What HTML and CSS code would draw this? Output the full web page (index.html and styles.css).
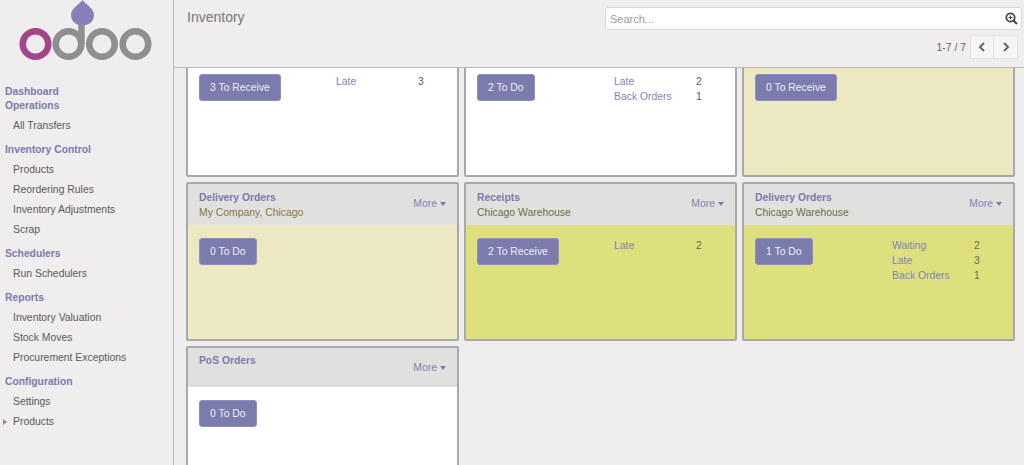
FILE: index.html
```html
<!DOCTYPE html>
<html lang="en">
<head>
<meta charset="utf-8">
<title>Inventory</title>
<link rel="stylesheet" href="styles.css">
</head>
<body>
<div class="app">
  <aside class="sidebar">
    <div class="logo">
      <svg width="173" height="62" viewBox="0 0 173 62">
        <g fill="none" stroke-width="6.500">
          <circle cx="35.500" cy="44" r="12.800" stroke="#a24689"/>
          <circle cx="68.500" cy="44" r="12.800" stroke="#8f8f8f"/>
          <circle cx="102" cy="44" r="12.800" stroke="#8f8f8f"/>
          <circle cx="135.500" cy="44" r="12.800" stroke="#8f8f8f"/>
          <path d="M81.500 44V20" stroke="#8f8f8f"/>
        </g>
        <path d="M82.500 0C79 5 71 8 71 15C71 21 76 25.500 82.500 25.500C89 25.500 94 21 94 15C94 8 86 5 82.500 0Z" fill="#8580b5"/>
      </svg>
    </div>
    <nav class="menu">
      <h4 class="menu-head">Dashboard</h4>
      <h4 class="menu-head">Operations</h4>
      <a class="menu-item">All Transfers</a>
      <h4 class="menu-head menu-gap">Inventory Control</h4>
      <a class="menu-item">Products</a>
      <a class="menu-item">Reordering Rules</a>
      <a class="menu-item">Inventory Adjustments</a>
      <a class="menu-item">Scrap</a>
      <h4 class="menu-head menu-gap">Schedulers</h4>
      <a class="menu-item">Run Schedulers</a>
      <h4 class="menu-head menu-gap">Reports</h4>
      <a class="menu-item">Inventory Valuation</a>
      <a class="menu-item">Stock Moves</a>
      <a class="menu-item">Procurement Exceptions</a>
      <h4 class="menu-head menu-gap">Configuration</h4>
      <a class="menu-item">Settings</a>
      <a class="menu-item menu-caret">Products</a>
    </nav>
  </aside>
  <main class="main">
    <header class="topbar">
      <h1 class="title">Inventory</h1>
      <div class="tools">
        <div class="search">
          <span class="search-text">Search...</span>
          <svg class="search-icon" width="13" height="13" viewBox="0 0 13 13">
            <circle cx="5.500" cy="5.500" r="4.200" fill="none" stroke="#444" stroke-width="1.800"/>
            <path d="M8.500 8.500L12 12" stroke="#444" stroke-width="2.200"/>
            <path d="M3.500 5.500H7.500M5.500 3.500V7.500" stroke="#444" stroke-width="1"/>
          </svg>
        </div>
        <div class="pager">
          <span class="pager-text">1-7 / 7</span>
          <div class="pager-btns">
            <span class="pager-btn"><svg width="8" height="10" viewBox="0 0 8 10"><path d="M6 1L2 5L6 9" fill="none" stroke="#666" stroke-width="2"/></svg></span>
            <span class="pager-btn"><svg width="8" height="10" viewBox="0 0 8 10"><path d="M2 1L6 5L2 9" fill="none" stroke="#666" stroke-width="2"/></svg></span>
          </div>
        </div>
      </div>
    </header>
    <div class="viewport">
      <div class="board">
        <section class="card">
          <div class="card-head"></div>
          <div class="card-body">
            <button class="action">3 To Receive</button>
            <dl class="stats"><div class="stat"><dt>Late</dt><dd>3</dd></div></dl>
          </div>
        </section>
        <section class="card">
          <div class="card-head"></div>
          <div class="card-body">
            <button class="action">2 To Do</button>
            <dl class="stats"><div class="stat"><dt>Late</dt><dd>2</dd></div><div class="stat"><dt>Back Orders</dt><dd>1</dd></div></dl>
          </div>
        </section>
        <section class="card card-pale">
          <div class="card-head"></div>
          <div class="card-body">
            <button class="action">0 To Receive</button>
          </div>
        </section>
        <section class="card card-pale">
          <div class="card-head">
            <div class="card-titles"><h3 class="card-title">Delivery Orders</h3><p class="card-sub">My Company, Chicago</p></div>
            <span class="more">More <i class="more-caret"></i></span>
          </div>
          <div class="card-body">
            <button class="action">0 To Do</button>
          </div>
        </section>
        <section class="card card-bright">
          <div class="card-head">
            <div class="card-titles"><h3 class="card-title">Receipts</h3><p class="card-sub">Chicago Warehouse</p></div>
            <span class="more">More <i class="more-caret"></i></span>
          </div>
          <div class="card-body">
            <button class="action">2 To Receive</button>
            <dl class="stats"><div class="stat"><dt>Late</dt><dd>2</dd></div></dl>
          </div>
        </section>
        <section class="card card-bright">
          <div class="card-head">
            <div class="card-titles"><h3 class="card-title">Delivery Orders</h3><p class="card-sub">Chicago Warehouse</p></div>
            <span class="more">More <i class="more-caret"></i></span>
          </div>
          <div class="card-body">
            <button class="action">1 To Do</button>
            <dl class="stats"><div class="stat"><dt>Waiting</dt><dd>2</dd></div><div class="stat"><dt>Late</dt><dd>3</dd></div><div class="stat"><dt>Back Orders</dt><dd>1</dd></div></dl>
          </div>
        </section>
        <section class="card">
          <div class="card-head card-head-short">
            <div class="card-titles"><h3 class="card-title">PoS Orders</h3></div>
            <span class="more">More <i class="more-caret"></i></span>
          </div>
          <div class="card-body">
            <button class="action">0 To Do</button>
          </div>
        </section>
      </div>
    </div>
  </main>
</div>
</body>
</html>
```
FILE: styles.css
```css
* { box-sizing: border-box; }
html, body { margin: 0; height: 100%; overflow: hidden; }
body { font-family: "Liberation Sans", Arial, sans-serif; font-size: 10.400px; color: #5a5a5a; background: #efedee; }
.app { display: flex; height: 465px; }

.sidebar { width: 174px; flex: none; border-right: 1px solid #b9b7b8; background: #efedee; }
.logo { height: 85px; }
.logo svg { display: block; }
.menu { display: flex; flex-direction: column; }
.menu-head { margin: 0; padding-left: 5px; height: 14px; line-height: 14px; font-size: 10.300px; font-weight: bold; color: #7c7bad; }
.menu-gap { margin-top: 7px; }
.menu-item { position: relative; padding-left: 13px; height: 20px; line-height: 20px; color: #5a5a5a; }
.menu-head + .menu-item { margin-top: 3px; }
.menu-caret::before { content: ""; position: absolute; left: 3px; top: 7px; border-left: 4px solid #8a8a8a; border-top: 3px solid transparent; border-bottom: 3px solid transparent; }

.main { flex: 1; min-width: 0; display: flex; flex-direction: column; }
.topbar { height: 68px; flex: none; display: flex; justify-content: space-between; border-bottom: 1px solid #b9b7b8; padding: 7px 2px 0 13px; }
.title { margin: 0; font-size: 14px; font-weight: normal; line-height: 20px; color: #777; }
.tools { width: 417px; display: flex; flex-direction: column; gap: 5px; }
.search { height: 23px; display: flex; align-items: center; justify-content: space-between; background: #fff; border: 1px solid #d8d6d7; border-radius: 3px; padding: 0 3px 0 4px; font-size: 11px; }
.search-text { color: #999; }
.search-icon { display: block; }
.pager { display: flex; justify-content: flex-end; align-items: center; gap: 4px; padding-right: 4px; }
.pager-text { color: #666; }
.pager-btns { display: flex; }
.pager-btn { width: 24px; height: 24px; display: flex; align-items: center; justify-content: center; background: #f6f5f5; border: 1px solid #e4e2e3; }
.pager-btn + .pager-btn { border-left: 0; }

.viewport { flex: 1; overflow: hidden; padding-left: 12px; }
.board { display: grid; grid-template-columns: repeat(3, 273px); grid-auto-rows: 159px; gap: 5px; margin-top: -50px; }
.card { display: flex; flex-direction: column; border: 2px solid #a9a9a9; border-radius: 2px; background: #fff; }
.card-pale { background: #ece8c1; }
.card-bright { background: #dee07d; }
.card-head { height: 41px; flex: none; display: flex; justify-content: space-between; align-items: flex-start; padding: 6px 11px 0 11px; background: #e0e0df; }
.card-head-short { height: 39px; padding-top: 5px; }
.card-head-short .more { margin-top: 7px; }
.card-title { margin: 0; line-height: 15px; font-size: 10.300px; font-weight: bold; color: #7c7bad; }
.card-sub { margin: 0; line-height: 15px; }
.card-pale .card-sub { color: #85793f; }
.card-bright .card-sub { color: #6a6e42; }
.more { margin-top: 6px; color: #8483b5; display: flex; align-items: center; gap: 3px; line-height: 15px; }
.more-caret { border-top: 4px solid #7c7bad; border-left: 3.500px solid transparent; border-right: 3.500px solid transparent; }
.card-body { flex: 1; display: flex; padding: 13px 11px; }
.action { height: 27px; padding: 0 10px; border: 1px solid #8f8fbb; border-radius: 3px; background: #7c7bad; color: #eeeef5; font: 10.400px "Liberation Sans", Arial, sans-serif; }
.stats { margin: 0 0 0 auto; width: 110px; }
.stat { display: flex; line-height: 15px; }
.stat dt { width: 82px; color: #8483b5; }
.stat dd { margin: 0; }
.card-bright .stat dd { color: #6a6e42; }
```
